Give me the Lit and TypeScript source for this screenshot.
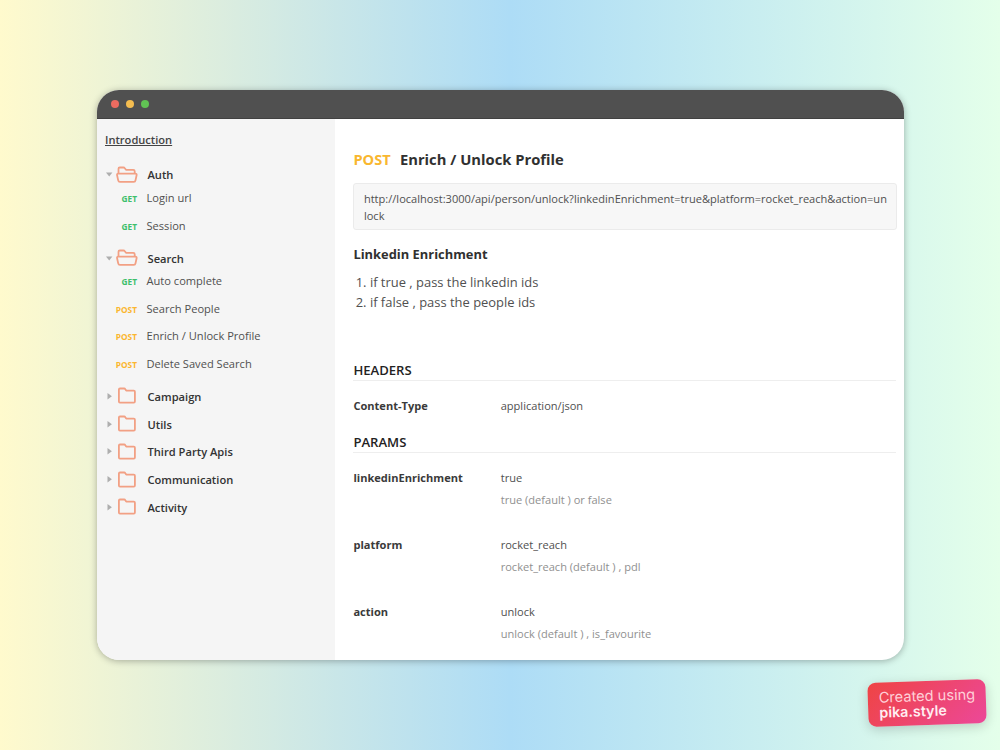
import { LitElement, html, css, svg } from "lit";
import { customElement, property } from "lit/decorators.js";

interface Endpoint {
  method: "GET" | "POST";
  name: string;
}
interface Folder {
  name: string;
  items?: Endpoint[];
}

const FOLDERS: Folder[] = [
  { name: "Auth", items: [{ method: "GET", name: "Login url" }, { method: "GET", name: "Session" }] },
  {
    name: "Search",
    items: [
      { method: "GET", name: "Auto complete" },
      { method: "POST", name: "Search People" },
      { method: "POST", name: "Enrich / Unlock Profile" },
      { method: "POST", name: "Delete Saved Search" },
    ],
  },
  { name: "Campaign" },
  { name: "Utils" },
  { name: "Third Party Apis" },
  { name: "Communication" },
  { name: "Activity" },
];

const PARAMS = [
  { key: "linkedinEnrichment", value: "true", note: "true (default ) or false" },
  { key: "platform", value: "rocket_reach", note: "rocket_reach (default ) , pdl" },
  { key: "action", value: "unlock", note: "unlock (default ) , is_favourite" },
];

const openFolder = svg`
  <path d="M2.500 7.700V2.800Q2.500 1.500 3.800 1.500H7.500Q8.300 1.500 8.800 2.200L10 3.800H17.300Q18.700 3.800 18.700 5.200V7.700"/>
  <path d="M2.200 7.700H19.400Q20.900 7.700 20.600 9.200L19.500 14.400Q19.200 15.900 17.800 15.900H3.900Q2.500 15.900 2.200 14.400L1.100 9.200Q0.800 7.700 2.200 7.700Z"/>`;
const closedFolder = svg`
  <path d="M2.900 14V2.600Q2.900 1.500 4 1.500H8.200Q8.900 1.500 9.300 2.200L10.200 3.600H17.800Q18.900 3.600 18.900 4.700V14.600Q18.900 15.700 17.800 15.700H4Q2.900 15.700 2.900 14.600Z"/>`;

@customElement("side-folder")
class SideFolder extends LitElement {
  @property({ attribute: false }) folder!: Folder;

  static styles = css`
    :host { display: block; }
    .head { display: flex; align-items: center; height: 18px; font-weight: 600; font-size: 11.150px; color: #333; }
    .caret { width: 7px; height: 7px; margin: 0 3.500px 0 9px; fill: #aeaeae; flex: none; }
    .icon { width: 22px; height: 17px; margin: -1px 9.500px 0 0; fill: none; stroke: #f2a084; stroke-width: 1.800; flex: none; }
    .item { display: flex; align-items: center; height: 27.700px; padding-bottom: 1px; box-sizing: border-box; font-size: 11.100px; color: #505050; }
    .method { width: 40.500px; margin-right: 9.500px; padding-top: 2px; text-align: right; font-size: 8.300px; font-weight: 700; }
    .get { color: #3dbf6c; }
    .post { color: #fbb62f; }
  `;

  render() {
    const { name, items } = this.folder;
    return html`
      <div class="head">
        <svg class="caret" viewBox="0 0 7 7">
          ${items ? svg`<path d="M0 1.400H6.400L3.200 5.400Z"/>` : svg`<path d="M1.500 0V6.400L5.900 3.200Z"/>`}
        </svg>
        <svg class="icon" viewBox="0 0 22 17" stroke-linejoin="round">${items ? openFolder : closedFolder}</svg>
        <span>${name}</span>
      </div>
      ${(items ?? []).map(
        (i) => html`<div class="item">
          <span class="method ${i.method.toLowerCase()}">${i.method}</span><span>${i.name}</span>
        </div>`
      )}
    `;
  }
}

@customElement("app-root")
class AppRoot extends LitElement {
  static styles = css`
    * { box-sizing: border-box; }
    :host {
      display: flex;
      position: relative;
      width: 1000px;
      height: 750px;
      overflow: hidden;
      padding: 90px 96px 90px 96.500px;
      background: linear-gradient(90deg, #fffacd 0%, #addcf6 51%, #e4ffea 100%);
      font-family: "Open Sans", sans-serif;
      box-sizing: border-box;
    }
    .window {
      display: flex;
      flex-direction: column;
      width: 100%;
      height: 569.500px;
      border-radius: 22px;
      overflow: hidden;
      background: #fff;
      box-shadow: 0 1px 7px rgba(0, 0, 0, 0.3);
    }
    .bar { display: flex; gap: 7px; height: 29px; padding: 10px 0 0 14.500px; background: #505050; border-bottom: 1px solid #414141; flex: none; }
    .dot { width: 8px; height: 8px; border-radius: 50%; }
    .red { background: #eb6b60; }
    .yellow { background: #f4bd50; }
    .green { background: #61c354; }
    .body { display: flex; flex: 1; min-height: 0; }
    .side { width: 238.500px; padding-top: 4.300px; background: #f5f5f5; flex: none; }
    .intro { display: flex; align-items: center; height: 33px; padding: 0 0 1.200px 8.500px; font-size: 11.100px; font-weight: 600; color: #444; text-decoration: underline; }
    .folder { margin-top: 9.700px; }
    .main { flex: 1; min-width: 0; padding: 28px 7px 0 18.400px; color: #505050; }
    .title { display: flex; align-items: baseline; gap: 9.300px; height: 24px; line-height: 24px; font-size: 14.750px; font-weight: 700; color: #303030; }
    .verb { color: #f9b72f; font-weight: 700; font-size: 14.600px; }
    .url {
      height: 47px; margin-top: 12px; padding: 6px 8px 5px 9.500px; line-height: 17px;
      font-size: 11.070px; word-break: break-all; background: #f7f7f7; border: 1px solid #ebebeb; border-radius: 3px;
    }
    .sub { height: 20px; margin-top: 14px; line-height: 20px; font-size: 12.900px; font-weight: 700; color: #303030; }
    .list { margin: 8px 0 0; padding-left: 16.500px; font-size: 12.950px; line-height: 20px; }
    .section { height: 21px; margin-right: 1px; line-height: 21px; font-size: 13.100px; font-weight: 600; color: #222; border-bottom: 1px solid #eeeeee; }
    .headers { margin-top: 48px; }
    .params { margin-top: 15px; }
    .row { display: grid; grid-template-columns: 147.300px 1fr; font-size: 11.070px; line-height: 22px; }
    .header-row { margin-top: 14px; }
    .param-row { height: 67.200px; }
    .param-list { padding-top: 14px; }
    .key { font-weight: 700; color: #3a3a3a; }
    .note { color: #909090; }
    .badge {
      position: absolute; left: 867.500px; top: 681px; width: 118px; height: 44px; padding: 8px 0 0 11px;
      border-radius: 8px; transform: rotate(-2deg);
      background: linear-gradient(135deg, #ef4444, #ec4899);
      box-shadow: 0 3px 12px rgba(0, 0, 0, 0.18);
      font-family: Inter, sans-serif; font-size: 14.600px; line-height: 15px; color: #ffd0d8;
    }
    .brand { margin-top: -1px; font-weight: 600; font-size: 14.300px; color: #ffeef2; }
  `;

  render() {
    return html`
      <div class="window">
        <div class="bar"><i class="dot red"></i><i class="dot yellow"></i><i class="dot green"></i></div>
        <div class="body">
          <nav class="side">
            <div class="intro">Introduction</div>
            ${FOLDERS.map((f) => html`<side-folder class="folder" .folder=${f}></side-folder>`)}
          </nav>
          <main class="main">
            <div class="title"><span class="verb">POST</span><span>Enrich / Unlock Profile</span></div>
            <div class="url">http://localhost:3000/api/person/unlock?linkedinEnrichment=true&amp;platform=rocket_reach&amp;action=unlock</div>
            <div class="sub">Linkedin Enrichment</div>
            <ol class="list"><li>if true , pass the linkedin ids</li><li>if false , pass the people ids</li></ol>
            <div class="section headers">HEADERS</div>
            <div class="row header-row"><span class="key">Content-Type</span><span>application/json</span></div>
            <div class="section params">PARAMS</div>
            <div class="param-list">
              ${PARAMS.map(
                (p) => html`<div class="row param-row">
                  <span class="key">${p.key}</span>
                  <div><div>${p.value}</div><div class="note">${p.note}</div></div>
                </div>`
              )}
            </div>
          </main>
        </div>
      </div>
      <div class="badge"><div>Created using</div><div class="brand">pika.style</div></div>
    `;
  }
}
